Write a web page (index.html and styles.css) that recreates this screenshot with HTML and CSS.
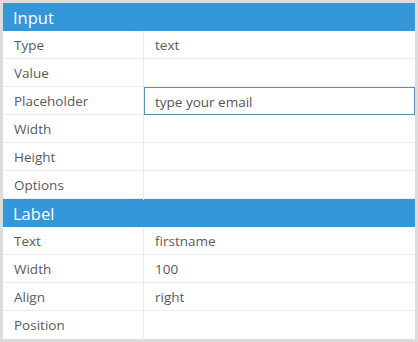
FILE: index.html
```html
<!DOCTYPE html>
<html lang="en">
	<head>
		<meta charset="UTF-8" />
		<title>properties</title>
		<link rel="stylesheet" href="styles.css">
	</head>
	<body>
		<div class="panel">
			<div class="group-title">Input</div>
			<div class="row"><div class="key">Type</div><div class="val">text</div></div>
			<div class="row"><div class="key">Value</div><div class="val"></div></div>
			<div class="row"><div class="key">Placeholder</div><div class="val val-edit"><input class="edit" type="text" value="type your email" /></div></div>
			<div class="row"><div class="key">Width</div><div class="val"></div></div>
			<div class="row"><div class="key">Height</div><div class="val"></div></div>
			<div class="row"><div class="key">Options</div><div class="val"></div></div>
			<div class="group-title">Label</div>
			<div class="row"><div class="key">Text</div><div class="val">firstname</div></div>
			<div class="row"><div class="key">Width</div><div class="val">100</div></div>
			<div class="row"><div class="key">Align</div><div class="val">right</div></div>
			<div class="row"><div class="key">Position</div><div class="val"></div></div>
		</div>
	</body>
</html>
```

FILE: styles.css
```css
html, body {
	margin: 0;
	height: 100%;
}
body {
	background: #dcdcdc;
	padding: 3px;
	box-sizing: border-box;
	font-family: "Open Sans", "Noto Sans", sans-serif;
	font-size: 13.5px;
	color: #5a5a5a;
}
.panel {
	background: #fff;
	height: 100%;
}
.group-title {
	height: 28px;
	line-height: 29px;
	padding-left: 10px;
	background: #3497da;
	color: #fff;
	font-size: 16.5px;
}
.row {
	display: grid;
	grid-template-columns: 141px 1fr;
	height: 28px;
	box-sizing: border-box;
	border-bottom: 1px solid #ececec;
}
.row:last-child {
	border-bottom: none;
}
.key {
	padding-left: 11px;
	line-height: 29px;
	border-right: 1px solid #ececec;
}
.val {
	padding-left: 11px;
	line-height: 29px;
}
.val-edit {
	padding: 0;
	display: flex;
}
.edit {
	flex: 1;
	margin: 0 0 -1px 0;
	height: 28px;
	box-sizing: border-box;
	border: 1px solid #5b93ad;
	padding: 2px 0 0 10px;
	font: inherit;
	color: #555;
	outline: none;
}
```
